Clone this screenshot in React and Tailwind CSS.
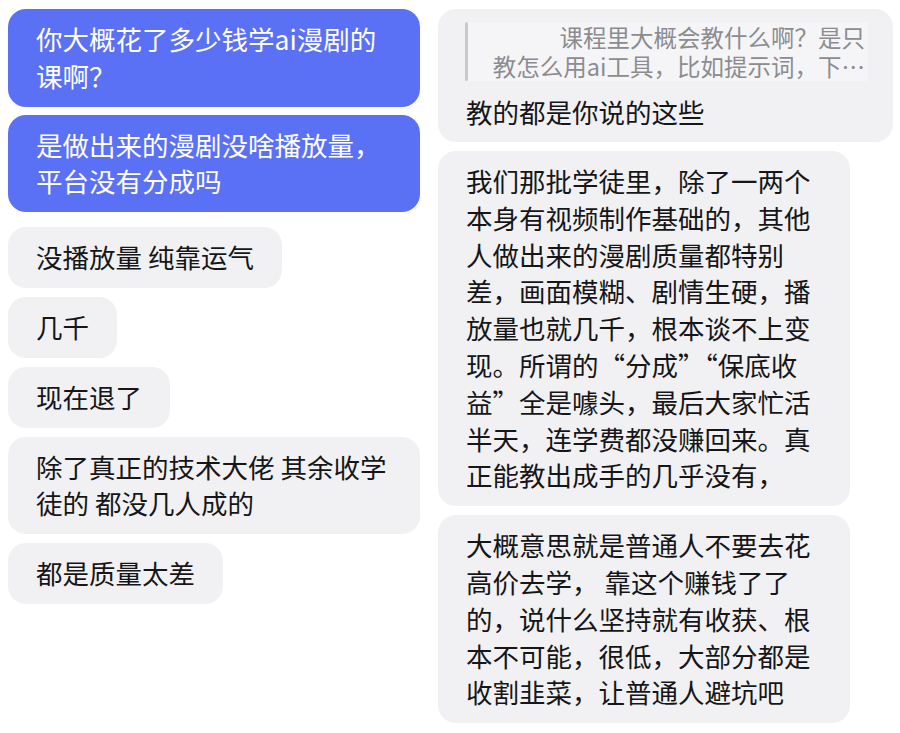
import React from "react";

const font = { fontFamily: '"Noto Sans CJK SC", "Noto Sans", sans-serif' };

function Bubble({ lines, blue, wide, className = "" }) {
  return (
    <div
      className={
        "rounded-[18px] px-7 py-3 text-[26.5px] leading-[36.8px] " +
        (blue ? "bg-[#5b71f5] text-white " : "bg-[#f1f1f3] text-[#161618] ") +
        (wide ? "w-[412px] " : "") +
        className
      }
    >
      {lines.map((l, i) => (
        <div key={i} className="whitespace-pre">
          {l}
        </div>
      ))}
    </div>
  );
}

export default function App() {
  return (
    <div className="min-h-[733px] w-[900px] bg-white" style={font}>
      <div className="flex gap-[18px] pl-2 pt-[9px]">
        {/* left: their side */}
        <div className="flex w-[412px] flex-col items-start">
          <Bubble blue wide lines={["你大概花了多少钱学ai漫剧的", "课啊？"]} />
          <Bubble blue wide className="mt-2" lines={["是做出来的漫剧没啥播放量，", "平台没有分成吗"]} />
          <Bubble className="mt-[15px]" lines={["没播放量 纯靠运气"]} />
          <Bubble className="mt-[9px]" lines={["几千"]} />
          <Bubble className="mt-[9px]" lines={["现在退了"]} />
          <Bubble wide className="mt-[9px]" lines={["除了真正的技术大佬 其余收学", "徒的 都没几人成的"]} />
          <Bubble className="mt-[9px]" lines={["都是质量太差"]} />
        </div>

        {/* right: replies */}
        <div className="flex flex-col items-start">
          <div className="w-[455px] rounded-[18px] bg-[#f1f1f3] pb-3 pl-[27px] pr-[25px] pt-[13px] text-[#161618]">
            <div className="flex bg-[#f5f5f7]">
              <div className="w-[3px] shrink-0 rounded-full bg-[#c9c9cd]" />
              <div className="flex-1 py-px pr-[3px] text-right text-[23.5px] leading-[28.5px] text-[#8c8c90]">
                <div className="whitespace-nowrap">课程里大概会教什么啊？是只</div>
                <div className="whitespace-nowrap">教怎么用ai工具，比如提示词，下…</div>
              </div>
            </div>
            <div className="mt-[13px] pl-px text-[26.5px] leading-[36px]">教的都是你说的这些</div>
          </div>

          <Bubble
            wide
            className="mt-[9px]"
            lines={[
              "我们那批学徒里，除了一两个",
              "本身有视频制作基础的，其他",
              "人做出来的漫剧质量都特别",
              "差，画面模糊、剧情生硬，播",
              "放量也就几千，根本谈不上变",
              "现。所谓的“分成”“保底收",
              "益”全是噱头，最后大家忙活",
              "半天，连学费都没赚回来。真",
              "正能教出成手的几乎没有，",
            ]}
          />

          <Bubble
            wide
            className="mt-[9px]"
            lines={[
              "大概意思就是普通人不要去花",
              "高价去学， 靠这个赚钱了了",
              "的，说什么坚持就有收获、根",
              "本不可能，很低，大部分都是",
              "收割韭菜，让普通人避坑吧",
            ]}
          />
        </div>
      </div>
    </div>
  );
}
